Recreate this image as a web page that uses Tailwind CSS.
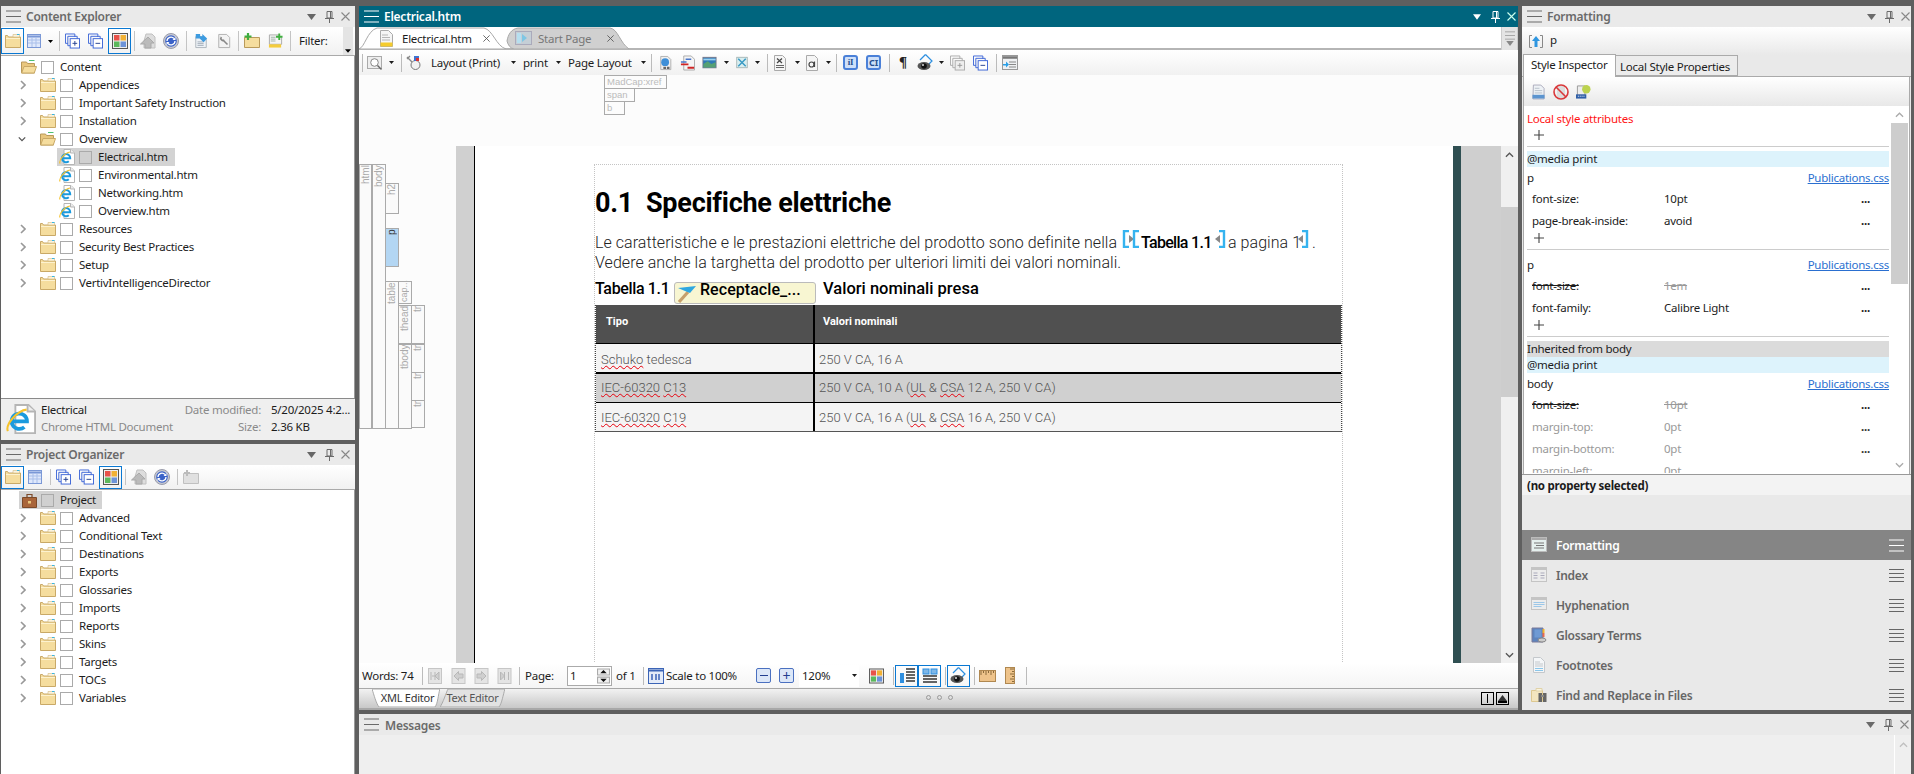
<!DOCTYPE html>
<html lang="en">
<head>
<meta charset="utf-8">
<title>Flare</title>
<script src="https://cdn.jsdelivr.net/npm/@tailwindcss/browser@4"></script>
</head>
<body class="w-[1914px] h-[774px] overflow-hidden bg-[#5f5f5f] flex font-['Noto_Sans',sans-serif] text-[11.5px] tracking-[-0.25px] leading-[18px] text-[#1c1c1c]">
<svg class="hidden">
<symbol id="menu3" viewBox="0 0 15 13"><path d="M0 1h15M0 6.500h15M0 12h15" stroke="currentColor" stroke-width="1" fill="none"/></symbol>
<symbol id="menu4" viewBox="0 0 15 13"><path d="M0 .5h15M0 4.500h15M0 8.500h15M0 12.500h15" stroke="currentColor" stroke-width="1" fill="none"/></symbol>
<symbol id="tri" viewBox="0 0 9 6"><path d="M0 0h9L4.500 6z" fill="currentColor"/></symbol>
<symbol id="pin" viewBox="0 0 9 12"><path d="M2 .5h5v6.500H2zM0 7.500h9M4.500 8v4M5.500 1v6" stroke="currentColor" fill="none"/></symbol>
<symbol id="close" viewBox="0 0 9 9"><path d="M.5.5l8 8M8.500.5l-8 8" stroke="currentColor" stroke-width="1.100" fill="none"/></symbol>
<symbol id="dd" viewBox="0 0 5 3"><path d="M0 0h5L2.500 3z" fill="currentColor"/></symbol>
<symbol id="chev" viewBox="0 0 6 10"><path d="M1 1l4 4-4 4" stroke="#999" stroke-width="1.600" fill="none"/></symbol>
<symbol id="chevd" viewBox="0 0 10 6"><path d="M1 1l4 4 4-4" stroke="#555" stroke-width="1.600" fill="none"/></symbol>
<symbol id="folder" viewBox="0 0 16 16"><path d="M.5 2.500h2l1 1.500h12v10.500H.5z" fill="#f5dd9e" stroke="#c9a967"/><path d="M1 5.500h14" stroke="#fdf2cf"/><path d="M8 1.500h6.500V4H8z" fill="#fbf4df" stroke="#d3b980" stroke-width=".6"/><path d="M12 1.500h2.500" stroke="#35b5e5"/></symbol>
<symbol id="folderopen" viewBox="0 0 16 16"><path d="M.5 3h5l1 1.500h7V14H.5z" fill="#e9c77e" stroke="#b99a5a"/><path d="M.7 14l2.300-6.500h12.500L13.300 14z" fill="#f5dd9e" stroke="#c9a967"/><path d="M8 1.500h5.500" stroke="#4cc070"/></symbol>
<symbol id="ie" viewBox="0 0 16 16"><path d="M5 .5h7l3.500 3.500v11.500H5z" fill="#fff" stroke="#b5b5b5"/><path d="M11.500 .5v3.500h4" fill="#eee" stroke="#b5b5b5"/><path d="M3.300 9.300h7.900A4.100 4.100 0 1 0 9.800 12.300" fill="none" stroke="#1a9ade" stroke-width="2"/><path d="M1 14.500C-.5 11 6 3.500 11 3" fill="none" stroke="#f5c22d" stroke-width="1.100"/></symbol>
<symbol id="grid" viewBox="0 0 16 16"><rect x="1.500" y="1.500" width="13" height="13" fill="#dfe8fb" stroke="#7b98d6"/><path d="M1.500 3.500h13" stroke="#7b98d6" stroke-width="2"/><path d="M2 7h12M2 10h12M6 4v10M10 4v10" stroke="#a9bfea"/></symbol>
<symbol id="plus" viewBox="0 0 16 16"><path d="M.5.5h10v3M.5.500v10h2.500" fill="none" stroke="#3b64d6"/><path d="M3 3h10v3M3 3v10h2.500" fill="none" stroke="#3b64d6"/><rect x="5.500" y="5.500" width="10" height="10" fill="#fff" stroke="#3b64d6"/><path d="M8 10.500h5M10.500 8v5" stroke="#223f90"/></symbol>
<symbol id="minus" viewBox="0 0 16 16"><path d="M.5.5h10v3M.5.500v10h2.500" fill="none" stroke="#3b64d6"/><path d="M3 3h10v3M3 3v10h2.500" fill="none" stroke="#3b64d6"/><rect x="5.500" y="5.500" width="10" height="10" fill="#fff" stroke="#3b64d6"/><path d="M8 10.500h5" stroke="#223f90"/></symbol>
<symbol id="plusg" viewBox="0 0 16 16"><path d="M.5.500h10v3M.5.500v10h2.500" fill="none" stroke="#aaa"/><path d="M3 3h10v3M3 3v10h2.500" fill="none" stroke="#aaa"/><rect x="5.500" y="5.500" width="10" height="10" fill="#eee" stroke="#aaa"/><path d="M8 10.500h5M10.500 8v5" stroke="#999"/></symbol>
<symbol id="colors" viewBox="0 0 16 16"><rect x=".5" y=".5" width="15" height="15" fill="#eee" stroke="#555"/><rect x="2" y="2" width="5.500" height="5.500" fill="#e8524a"/><rect x="8.500" y="2" width="5.500" height="5.500" fill="#f2b134"/><rect x="2" y="8.500" width="5.500" height="5.500" fill="#5cb85c"/><rect x="8.500" y="8.500" width="5.500" height="5.500" fill="#6c93d8"/></symbol>
<symbol id="upg" viewBox="0 0 16 16"><path d="M6 1h6l3 3v11H4V8z" fill="#ddd" stroke="#c0c0c0"/><path d="M.5 11L8 4l6 6h-3v5H5v-4z" fill="#bbb" stroke="#a9a9a9"/></symbol>
<symbol id="sync" viewBox="0 0 16 16"><circle cx="8" cy="8" r="7.500" fill="#c7c9d2" stroke="#9a9cab"/><circle cx="8" cy="8" r="5.800" fill="#3a62c8"/><path d="M4 8a4 4 0 0 1 7-2.500M12 8a4 4 0 0 1-7 2.500" stroke="#fff" stroke-width="1.300" fill="none"/><path d="M9.500 7h3V4zM6.500 9h-3v3z" fill="#fff"/></symbol>
<symbol id="docarrow" viewBox="0 0 16 16"><path d="M2 3h9l3 3v9.500H2z" fill="#eef2f7" stroke="#a8b0b8"/><path d="M4 9h7M4 11h7M4 13h7" stroke="#9ba7b3"/><path d="M2 0h5v2.500h2.500V0L15 5l-4 4.500L6.500 5H2z" fill="#3d9be0"/></symbol>
<symbol id="docwrench" viewBox="0 0 16 16"><path d="M2 .5h9l3.500 3.500v11.500H2z" fill="#f3f3f3" stroke="#aaa"/><path d="M12 12L6.500 6.500M5 3.500a2.500 2.500 0 0 0 3.500 3.500" stroke="#888" stroke-width="1.800" fill="none"/></symbol>
<symbol id="folderplus" viewBox="0 0 16 16"><path d="M.5 4.500h15v10H.5z" fill="#f5dd9e" stroke="#b99a5a"/><path d="M4 0v7M.5 3.500h7" stroke="#3fae3f" stroke-width="2.200"/></symbol>
<symbol id="docplus" viewBox="0 0 16 16"><path d="M1.500 1.500h10l3 3v7h-13z" fill="#f5f5f5" stroke="#aaa"/><path d="M3 4h5M3 6h5M3 8h5" stroke="#9fb2a8"/><rect x="1" y="11.500" width="13" height="3.500" fill="#f4cc3d"/><path d="M12 0v7M8.500 3.500h7" stroke="#3fae3f" stroke-width="2"/></symbol>
<symbol id="foldergplus" viewBox="0 0 16 16"><path d="M.5 4.500h15v10H.5z" fill="#e0e0e0" stroke="#c0c0c0"/><path d="M4 1v6M1 4h6" stroke="#bbb" stroke-width="2"/></symbol>
<symbol id="mag" viewBox="0 0 16 16"><rect x=".5" y="1.500" width="14" height="12" fill="#eee" stroke="#aaa"/><circle cx="7.500" cy="7.500" r="3.800" fill="#fff" stroke="#888"/><path d="M10.500 10.500l4 4" stroke="#666" stroke-width="1.500"/></symbol>
<symbol id="pinmag" viewBox="0 0 16 16"><circle cx="9.500" cy="10" r="4.500" fill="#f1f1f1" stroke="#777"/><path d="M6 7L1 2M4 1l-3 3" stroke="#888" stroke-width="1.400"/><rect x="8" y="1" width="5" height="5" fill="#3f73cf"/><rect x="10" y="3" width="3" height="3" fill="#d93030"/></symbol>
<symbol id="doclink" viewBox="0 0 16 16"><path d="M2 .5h8l3.500 3.500v11.500H2z" fill="#f0f0f0" stroke="#aaa"/><circle cx="7" cy="7" r="4.500" fill="#3e8fd8"/><path d="M5 13.500h8" stroke="#666" stroke-width="2.500" stroke-dasharray="3 1"/></symbol>
<symbol id="docred" viewBox="0 0 16 16"><path d="M4 .5h8l3.500 3.500v11.500H4z" fill="#f5f5f5" stroke="#aaa"/><path d="M6 4h6M1 7h6" stroke="#4a76c9" stroke-width="1.500"/><path d="M1 9.500h8M8 13h7" stroke="#d02525" stroke-width="2"/></symbol>
<symbol id="image" viewBox="0 0 16 16"><rect x=".5" y="1.500" width="15" height="12" fill="#2f79b8" stroke="#778"/><path d="M1 9l5-3 4 3 5-2v6H1z" fill="#56a073"/><path d="M1 3h14v2H1z" fill="#9bd1ef"/></symbol>
<symbol id="ximage" viewBox="0 0 16 16"><rect x="1" y="1" width="14" height="14" fill="#d9eef0" stroke="#9aa"/><path d="M3 3l10 10M13 3L3 13" stroke="#3a9ac4" stroke-width="2"/></symbol>
<symbol id="docx" viewBox="0 0 12 16"><path d="M.5.5h8l3 3v12H.5z" fill="#f5f5f5" stroke="#aaa"/><path d="M3 3.500l5 4.500M8 3.500L3 8" stroke="#444" stroke-width="1.200"/><path d="M2 10.500h8M2 12.500h8" stroke="#666"/></symbol>
<symbol id="doca" viewBox="0 0 12 16"><path d="M.5.5h8l3 3v12H.5z" fill="#f5f5f5" stroke="#aaa"/><circle cx="5.500" cy="9.500" r="2.500" fill="none" stroke="#444" stroke-width="1.200"/><path d="M8.500 6.500v5.500" stroke="#444" stroke-width="1.200"/></symbol>
<symbol id="eye" viewBox="0 0 17 17"><path d="M8.500 .5L15 7l-3 3" fill="none" stroke="#2c8fe0" stroke-width="1.200"/><path d="M8.500 .5L3 6" fill="none" stroke="#2c8fe0" stroke-width="1.200"/><ellipse cx="7" cy="12" rx="6.500" ry="4" fill="#555"/><circle cx="7" cy="12" r="2.800" fill="#111"/><circle cx="6" cy="11" r="1" fill="#ddd"/></symbol>
<symbol id="panel" viewBox="0 0 16 16"><rect x=".5" y=".5" width="15" height="14" fill="#eef0f2" stroke="#999"/><path d="M1 2.500h14" stroke="#777" stroke-width="2.500"/><path d="M7 7h7M7 9.500h7M7 12h7" stroke="#888"/><path d="M1 9h3V6.500L7 9.500 4 12.500V10.500H1z" fill="#2aa0e8"/></symbol>
<symbol id="navfirst" viewBox="0 0 14 16"><rect x=".5" y=".5" width="13" height="15" fill="#e4e4e4" stroke="#c6c6c6"/><path d="M3 4v8M7 4v8M7 8l-3 0M11 4v8L7 8z" stroke="#b8b8b8" fill="#cfcfcf"/></symbol>
<symbol id="navprev" viewBox="0 0 14 16"><rect x=".5" y=".5" width="13" height="15" fill="#e4e4e4" stroke="#c6c6c6"/><path d="M2.500 8L7 3.500V6h4.500v4H7v2.500z" fill="#cfcfcf" stroke="#b8b8b8"/></symbol>
<symbol id="navnext" viewBox="0 0 14 16"><rect x=".5" y=".5" width="13" height="15" fill="#e4e4e4" stroke="#c6c6c6"/><path d="M11.500 8L7 3.500V6H2.500v4H7v2.500z" fill="#cfcfcf" stroke="#b8b8b8"/></symbol>
<symbol id="navlast" viewBox="0 0 14 16"><rect x=".5" y=".5" width="13" height="15" fill="#e4e4e4" stroke="#c6c6c6"/><path d="M11 4v8M7 4v8M3 4v8l4-4z" stroke="#b8b8b8" fill="#cfcfcf"/></symbol>
<symbol id="scale" viewBox="0 0 16 16"><rect x=".5" y=".5" width="15" height="15" fill="#e4ebf8" stroke="#3b64b6"/><path d="M1 2.500h14" stroke="#3b64b6" stroke-width="2"/><path d="M4 6v6M8 6v6M11 6v6" stroke="#3b64b6" stroke-width="1.500"/></symbol>
<symbol id="rulerh" viewBox="0 0 17 12"><rect x=".5" y=".5" width="16" height="11" fill="#eec38a" stroke="#b08850"/><path d="M2 1v4M4.500 1v2M7 1v4M9.500 1v2M12 1v4M14.500 1v2" stroke="#8a6a3a"/></symbol>
<symbol id="rulerv" viewBox="0 0 10 17"><rect x=".5" y=".5" width="9" height="16" fill="#eec38a" stroke="#b08850"/><path d="M9 2H5M9 4.500H7M9 7H5M9 9.500H7M9 12H5M9 14.500H7" stroke="#8a6a3a"/></symbol>
<symbol id="sidebar" viewBox="0 0 16 16"><rect x="1" y="5" width="4" height="10" fill="#2f8fe0"/><path d="M7 1h9M7 4h9M7 7h9M7 10h9M7 13h9" stroke="#333" stroke-width="1.500"/></symbol>
<symbol id="topbar" viewBox="0 0 16 16"><rect x="1" y="1" width="6" height="5" fill="#7eb7e8" stroke="#2f8fe0"/><rect x="9" y="1" width="6" height="5" fill="#7eb7e8" stroke="#2f8fe0"/><path d="M1 8h14M1 11h14M1 14h14" stroke="#333" stroke-width="1.500"/></symbol>
<symbol id="upbox" viewBox="0 0 14 13"><path d="M3 .5H.5v12H3M11 .5h2.500v12H11" fill="none" stroke="#888"/><path d="M7 1L11 6H8.500V12h-3V6H3z" fill="#2f96e0"/></symbol>
<symbol id="sheet" viewBox="0 0 14 16"><path d="M1.500.5h8l3.500 3.500v11.500h-12z" fill="#eef2f6" stroke="#aab"/><path d="M3 4h5M3 6.500h8M3 9h8" stroke="#b5bec8"/><rect x=".5" y="11" width="13" height="4" fill="#5c94cf"/></symbol>
<symbol id="noentry" viewBox="0 0 16 16"><path d="M4 2h8v12H4z" fill="#ddd"/><circle cx="8" cy="8" r="7" fill="none" stroke="#d9383a" stroke-width="1.600"/><path d="M3 3l10 10" stroke="#d9383a" stroke-width="1.600"/></symbol>
<symbol id="sheetlight" viewBox="0 0 16 16"><path d="M1.500 1.500h8v10h-8z" fill="#eee" stroke="#999"/><circle cx="11" cy="5" r="4.500" fill="#bcd34f"/><rect x="0" y="10.500" width="11" height="4.500" fill="#2f5fa8"/><path d="M2 12.500h7" stroke="#fff" stroke-dasharray="1 1"/></symbol>
<symbol id="fmtpanel" viewBox="0 0 16 16"><rect x=".5" y=".5" width="15" height="14" fill="#e5f0ee" stroke="#bbb"/><path d="M1 2h14" stroke="#aaa" stroke-width="2"/><path d="M3 6h10M5 8.500h8M3 11h10" stroke="#777"/></symbol>
<symbol id="idxpanel" viewBox="0 0 16 16"><rect x=".5" y=".5" width="15" height="14" fill="#ececec" stroke="#c4c4c4"/><path d="M1 2h14" stroke="#c4c4c4" stroke-width="2"/><path d="M2.500 6h4M9.500 6h4M2.500 8.500h4M9.500 8.500h4M2.500 11h4M9.500 11h4" stroke="#aab"/></symbol>
<symbol id="hyppanel" viewBox="0 0 16 16"><rect x=".5" y=".5" width="15" height="12" fill="#ececec" stroke="#c4c4c4"/><path d="M1 2h14" stroke="#c4c4c4" stroke-width="2"/><path d="M2.500 5.500h11M2.500 7.500h11M2.500 9.500h8" stroke="#9cc7e8"/></symbol>
<symbol id="book" viewBox="0 0 16 16"><path d="M1 1h11v14H1z" fill="#5d83bd" stroke="#7a7a9a"/><path d="M3.500 2.500h7v8h-7z" fill="#6f9ad4"/><path d="M12.500 2v4" stroke="#f3b32c" stroke-width="2"/><path d="M12.500 6v4" stroke="#e86a50" stroke-width="2"/><ellipse cx="11" cy="13" rx="4" ry="2" fill="#ccc" stroke="#888"/></symbol>
<symbol id="foot" viewBox="0 0 12 16"><path d="M.5.5h7l4 4v11H.500z" fill="#f4f6f8" stroke="#c4c8cc"/><path d="M2 5h5M2 7h8M2 9h8" stroke="#c4c8cc"/><path d="M2 11.500h8M2 13.500h8" stroke="#8ac6ea"/></symbol>
<symbol id="findf" viewBox="0 0 16 16"><path d="M.5 3.500h11V14.500H.5z" fill="#f3e5bf" stroke="#ddc890"/><path d="M5 1.500h6V4H5z" fill="#faf3dd" stroke="#e0d2a8"/><rect x="7.500" y="6" width="3.500" height="9" fill="#666"/><rect x="12" y="6" width="3.500" height="9" fill="#666"/><path d="M10 9h3" stroke="#888" stroke-width="2"/></symbol>
<symbol id="tabicon" viewBox="0 0 13 17"><path d="M.5.5h8l4 4v12H.500z" fill="#f5f5f5" stroke="#aaa"/><path d="M2 5h6M2 7.500h8M2 10h8" stroke="#b5b5b5"/><rect x=".5" y="12.500" width="12" height="4" fill="#f5cc2d"/></symbol>
<symbol id="startpage" viewBox="0 0 17 14"><rect x=".5" y=".5" width="16" height="13" fill="#c5cfd6" stroke="#aab"/><rect x="2" y="2" width="4" height="10" fill="#b6dff0"/><path d="M7 3l5 4-5 4z" fill="#7ec6e4"/></symbol>
<symbol id="hammer" viewBox="0 0 20 20"><path d="M12 8L3 18" stroke="#c7a06b" stroke-width="3.200" fill="none"/><path d="M2 4l18-2-6 7-5-2z" fill="#2ea7e0"/></symbol>
<symbol id="updown" viewBox="0 0 12 14"><path d="M.5.5h11v5.500H.5zM.5 8h11v5.500H.5z" fill="#f1f1f1" stroke="#aaa"/><path d="M3 4.500L6 1.500 9 4.500zM3 9.500L6 12.500 9 9.500z" fill="#111"/></symbol>
<symbol id="chevup" viewBox="0 0 10 6"><path d="M1 5l4-4 4 4" stroke="currentColor" stroke-width="1.400" fill="none"/></symbol>
<symbol id="chevdown" viewBox="0 0 10 6"><path d="M1 1l4 4 4-4" stroke="currentColor" stroke-width="1.400" fill="none"/></symbol>
<symbol id="plussign" viewBox="0 0 10 10"><path d="M5 0v10M0 5h10" stroke="#444" stroke-width="1.100"/></symbol>
<symbol id="bracket" viewBox="0 0 9 18"><path d="M7 1H2v16h5" fill="none" stroke="#35b3ef" stroke-width="2.400"/></symbol>
<symbol id="bracketr" viewBox="0 0 9 18"><path d="M2 1h5v16H2" fill="none" stroke="#35b3ef" stroke-width="2.400"/></symbol>
<symbol id="trileft" viewBox="0 0 5 8"><path d="M5 0v8L0 4z" fill="#888"/></symbol>
<symbol id="triright" viewBox="0 0 5 8"><path d="M0 0v8l5-4z" fill="#888"/></symbol>
</svg>

<!-- left column -->
<div class="ml-[1px] w-[354px] flex flex-col pt-[6px]">
  <div class="h-[21px] bg-[#eaeaea] flex items-center text-[#6a6a6a] shrink-0">
    <svg class="ml-[5px] w-[15px] h-[13px]"><use href="#menu3"/></svg>
    <span class="ml-[5px] font-semibold text-[12px] w-[110px] whitespace-nowrap">Content Explorer</span>
    <svg class="ml-[171px] w-[9px] h-[6px] text-[#666]"><use href="#tri"/></svg>
    <svg class="ml-[9px] w-[9px] h-[12px]"><use href="#pin"/></svg>
    <svg class="ml-[7px] w-[9px] h-[9px] text-[#888]"><use href="#close"/></svg>
  </div>
  <div class="h-[29px] flex items-center bg-gradient-to-b from-white to-[#f1f1f1] border-b border-[#aaa] shrink-0">
    <div class="w-[23px] h-[26px] border border-[#0a78d2] flex items-center justify-center"><svg class="w-[16px] h-[16px]"><use href="#folder"/></svg></div>
    <svg class="ml-[2px] w-[16px] h-[16px]"><use href="#grid"/></svg>
    <svg class="ml-[6px] w-[5px] h-[3px] text-black"><use href="#dd"/></svg>
    <i class="ml-[6px] w-px h-[20px] bg-[#c4c4c4]"></i>
    <svg class="ml-[5px] w-[15px] h-[16px]"><use href="#plus"/></svg>
    <svg class="ml-[8px] w-[15px] h-[16px]"><use href="#minus"/></svg>
    <div class="ml-[5px] w-[23px] h-[26px] border border-[#0a78d2] flex items-center justify-center"><svg class="w-[16px] h-[16px]"><use href="#colors"/></svg></div>
    <i class="ml-[3px] w-px h-[20px] bg-[#c4c4c4]"></i>
    <svg class="ml-[5px] w-[16px] h-[16px]"><use href="#upg"/></svg>
    <svg class="ml-[7px] w-[16px] h-[16px]"><use href="#sync"/></svg>
    <i class="ml-[7px] w-px h-[20px] bg-[#c4c4c4]"></i>
    <svg class="ml-[7px] w-[14px] h-[16px]"><use href="#docarrow"/></svg>
    <svg class="ml-[9px] w-[14px] h-[16px]"><use href="#docwrench"/></svg>
    <i class="ml-[7px] w-px h-[20px] bg-[#c4c4c4]"></i>
    <svg class="ml-[5px] w-[16px] h-[16px]"><use href="#folderplus"/></svg>
    <svg class="ml-[8px] w-[15px] h-[16px]"><use href="#docplus"/></svg>
    <i class="ml-[7px] w-px h-[20px] bg-[#c4c4c4]"></i>
    <span class="ml-[8px] w-[36px] whitespace-nowrap">Filter:</span>
    <div class="ml-[8px] w-[10px] h-[28px] bg-[#e4e4e4] flex flex-col justify-end items-center pb-[2px]"><svg class="w-[6px] h-[4px] text-black"><use href="#dd"/></svg></div>
  </div>
  <div class="h-[342px] bg-white border-r border-[#9a9a9a] pt-[2px] shrink-0">
    <div class="flex items-center h-[18px]"><svg class="ml-[20px] w-[16px] h-[16px]"><use href="#folderopen"/></svg><i class="ml-[4px] w-[13px] h-[13px] border border-[#aaa]"></i><span class="ml-[6px]">Content</span></div>
    <div class="flex items-center h-[18px]"><svg class="ml-[19px] w-[6px] h-[10px]"><use href="#chev"/></svg><svg class="ml-[14px] w-[16px] h-[16px]"><use href="#folder"/></svg><i class="ml-[4px] w-[13px] h-[13px] border border-[#aaa]"></i><span class="ml-[6px]">Appendices</span></div>
    <div class="flex items-center h-[18px]"><svg class="ml-[19px] w-[6px] h-[10px]"><use href="#chev"/></svg><svg class="ml-[14px] w-[16px] h-[16px]"><use href="#folder"/></svg><i class="ml-[4px] w-[13px] h-[13px] border border-[#aaa]"></i><span class="ml-[6px]">Important Safety Instruction</span></div>
    <div class="flex items-center h-[18px]"><svg class="ml-[19px] w-[6px] h-[10px]"><use href="#chev"/></svg><svg class="ml-[14px] w-[16px] h-[16px]"><use href="#folder"/></svg><i class="ml-[4px] w-[13px] h-[13px] border border-[#aaa]"></i><span class="ml-[6px]">Installation</span></div>
    <div class="flex items-center h-[18px]"><svg class="ml-[17px] w-[8px] h-[6px]"><use href="#chevd"/></svg><svg class="ml-[14px] w-[16px] h-[16px]"><use href="#folderopen"/></svg><i class="ml-[4px] w-[13px] h-[13px] border border-[#aaa]"></i><span class="ml-[6px]">Overview</span></div>
    <div class="flex items-center h-[18px] ml-[56px] w-[118px] bg-[#d3d3d3]"><svg class="ml-[2px] w-[16px] h-[16px]"><use href="#ie"/></svg><i class="ml-[4px] w-[13px] h-[13px] border border-[#aaa] bg-[#d0d0d0]"></i><span class="ml-[6px]">Electrical.htm</span></div>
    <div class="flex items-center h-[18px]"><svg class="ml-[58px] w-[16px] h-[16px]"><use href="#ie"/></svg><i class="ml-[4px] w-[13px] h-[13px] border border-[#aaa]"></i><span class="ml-[6px]">Environmental.htm</span></div>
    <div class="flex items-center h-[18px]"><svg class="ml-[58px] w-[16px] h-[16px]"><use href="#ie"/></svg><i class="ml-[4px] w-[13px] h-[13px] border border-[#aaa]"></i><span class="ml-[6px]">Networking.htm</span></div>
    <div class="flex items-center h-[18px]"><svg class="ml-[58px] w-[16px] h-[16px]"><use href="#ie"/></svg><i class="ml-[4px] w-[13px] h-[13px] border border-[#aaa]"></i><span class="ml-[6px]">Overview.htm</span></div>
    <div class="flex items-center h-[18px]"><svg class="ml-[19px] w-[6px] h-[10px]"><use href="#chev"/></svg><svg class="ml-[14px] w-[16px] h-[16px]"><use href="#folder"/></svg><i class="ml-[4px] w-[13px] h-[13px] border border-[#aaa]"></i><span class="ml-[6px]">Resources</span></div>
    <div class="flex items-center h-[18px]"><svg class="ml-[19px] w-[6px] h-[10px]"><use href="#chev"/></svg><svg class="ml-[14px] w-[16px] h-[16px]"><use href="#folder"/></svg><i class="ml-[4px] w-[13px] h-[13px] border border-[#aaa]"></i><span class="ml-[6px]">Security Best Practices</span></div>
    <div class="flex items-center h-[18px]"><svg class="ml-[19px] w-[6px] h-[10px]"><use href="#chev"/></svg><svg class="ml-[14px] w-[16px] h-[16px]"><use href="#folder"/></svg><i class="ml-[4px] w-[13px] h-[13px] border border-[#aaa]"></i><span class="ml-[6px]">Setup</span></div>
    <div class="flex items-center h-[18px]"><svg class="ml-[19px] w-[6px] h-[10px]"><use href="#chev"/></svg><svg class="ml-[14px] w-[16px] h-[16px]"><use href="#folder"/></svg><i class="ml-[4px] w-[13px] h-[13px] border border-[#aaa]"></i><span class="ml-[6px]">VertivIntelligenceDirector</span></div>
  </div>
  <div class="h-[42px] bg-[#efefef] border-t border-[#8a8a8a] flex shrink-0">
    <svg class="ml-[5px] mt-[5px] w-[30px] h-[30px]"><use href="#ie"/></svg>
    <div class="ml-[5px] w-[180px] flex flex-col pt-[2px] leading-[17px]"><span>Electrical</span><span class="text-[#8a8a8a]">Chrome HTML Document</span></div>
    <div class="w-[40px] flex flex-col pt-[2px] leading-[17px] items-end text-[#8a8a8a] whitespace-nowrap"><span>Date modified:</span><span>Size:</span></div>
    <div class="ml-[10px] flex flex-col pt-[2px] leading-[17px] whitespace-nowrap"><span>5/20/2025 4:2...</span><span>2.36 KB</span></div>
  </div>
  <div class="mt-[4px] h-[21px] bg-[#eaeaea] flex items-center text-[#6a6a6a] shrink-0">
    <svg class="ml-[5px] w-[15px] h-[13px]"><use href="#menu3"/></svg>
    <span class="ml-[5px] font-semibold text-[12px] w-[110px] whitespace-nowrap">Project Organizer</span>
    <svg class="ml-[171px] w-[9px] h-[6px] text-[#666]"><use href="#tri"/></svg>
    <svg class="ml-[9px] w-[9px] h-[12px]"><use href="#pin"/></svg>
    <svg class="ml-[7px] w-[9px] h-[9px] text-[#888]"><use href="#close"/></svg>
  </div>
  <div class="h-[25px] flex items-center bg-gradient-to-b from-white to-[#f1f1f1] border-b border-[#aaa] shrink-0">
    <div class="w-[23px] h-[23px] border border-[#0a78d2] flex items-center justify-center"><svg class="w-[16px] h-[16px]"><use href="#folder"/></svg></div>
    <svg class="ml-[3px] w-[16px] h-[16px]"><use href="#grid"/></svg>
    <i class="ml-[7px] w-px h-[16px] bg-[#c4c4c4]"></i>
    <svg class="ml-[5px] w-[15px] h-[16px]"><use href="#plus"/></svg>
    <svg class="ml-[8px] w-[15px] h-[16px]"><use href="#minus"/></svg>
    <div class="ml-[5px] w-[23px] h-[23px] border border-[#0a78d2] flex items-center justify-center"><svg class="w-[16px] h-[16px]"><use href="#colors"/></svg></div>
    <i class="ml-[3px] w-px h-[16px] bg-[#c4c4c4]"></i>
    <svg class="ml-[5px] w-[16px] h-[16px]"><use href="#upg"/></svg>
    <svg class="ml-[7px] w-[16px] h-[16px]"><use href="#sync"/></svg>
    <i class="ml-[7px] w-px h-[16px] bg-[#c4c4c4]"></i>
    <svg class="ml-[5px] w-[16px] h-[16px]"><use href="#foldergplus"/></svg>
  </div>
  <div class="flex-1 bg-white border-r border-[#9a9a9a] pt-[1px]">
    <div class="flex items-center h-[18px] ml-[18px] w-[83px] bg-[#d3d3d3]">
      <svg class="ml-[3px] w-[15px] h-[15px]" viewBox="0 0 15 15"><path d="M.5 4.500h14v10H.5z" fill="#a9653a" stroke="#7c4a2a"/><path d="M5 4.500V1.500h5v3" fill="none" stroke="#7c4a2a" stroke-width="1.200"/><rect x="6" y="8" width="3" height="2.500" fill="#e9c77e"/></svg>
      <i class="ml-[4px] w-[13px] h-[13px] border border-[#aaa] bg-[#d0d0d0]"></i><span class="ml-[6px]">Project</span></div>
    <div class="flex items-center h-[18px]"><svg class="ml-[19px] w-[6px] h-[10px]"><use href="#chev"/></svg><svg class="ml-[14px] w-[16px] h-[16px]"><use href="#folder"/></svg><i class="ml-[4px] w-[13px] h-[13px] border border-[#aaa]"></i><span class="ml-[6px]">Advanced</span></div>
    <div class="flex items-center h-[18px]"><svg class="ml-[19px] w-[6px] h-[10px]"><use href="#chev"/></svg><svg class="ml-[14px] w-[16px] h-[16px]"><use href="#folder"/></svg><i class="ml-[4px] w-[13px] h-[13px] border border-[#aaa]"></i><span class="ml-[6px]">Conditional Text</span></div>
    <div class="flex items-center h-[18px]"><svg class="ml-[19px] w-[6px] h-[10px]"><use href="#chev"/></svg><svg class="ml-[14px] w-[16px] h-[16px]"><use href="#folder"/></svg><i class="ml-[4px] w-[13px] h-[13px] border border-[#aaa]"></i><span class="ml-[6px]">Destinations</span></div>
    <div class="flex items-center h-[18px]"><svg class="ml-[19px] w-[6px] h-[10px]"><use href="#chev"/></svg><svg class="ml-[14px] w-[16px] h-[16px]"><use href="#folder"/></svg><i class="ml-[4px] w-[13px] h-[13px] border border-[#aaa]"></i><span class="ml-[6px]">Exports</span></div>
    <div class="flex items-center h-[18px]"><svg class="ml-[19px] w-[6px] h-[10px]"><use href="#chev"/></svg><svg class="ml-[14px] w-[16px] h-[16px]"><use href="#folder"/></svg><i class="ml-[4px] w-[13px] h-[13px] border border-[#aaa]"></i><span class="ml-[6px]">Glossaries</span></div>
    <div class="flex items-center h-[18px]"><svg class="ml-[19px] w-[6px] h-[10px]"><use href="#chev"/></svg><svg class="ml-[14px] w-[16px] h-[16px]"><use href="#folder"/></svg><i class="ml-[4px] w-[13px] h-[13px] border border-[#aaa]"></i><span class="ml-[6px]">Imports</span></div>
    <div class="flex items-center h-[18px]"><svg class="ml-[19px] w-[6px] h-[10px]"><use href="#chev"/></svg><svg class="ml-[14px] w-[16px] h-[16px]"><use href="#folder"/></svg><i class="ml-[4px] w-[13px] h-[13px] border border-[#aaa]"></i><span class="ml-[6px]">Reports</span></div>
    <div class="flex items-center h-[18px]"><svg class="ml-[19px] w-[6px] h-[10px]"><use href="#chev"/></svg><svg class="ml-[14px] w-[16px] h-[16px]"><use href="#folder"/></svg><i class="ml-[4px] w-[13px] h-[13px] border border-[#aaa]"></i><span class="ml-[6px]">Skins</span></div>
    <div class="flex items-center h-[18px]"><svg class="ml-[19px] w-[6px] h-[10px]"><use href="#chev"/></svg><svg class="ml-[14px] w-[16px] h-[16px]"><use href="#folder"/></svg><i class="ml-[4px] w-[13px] h-[13px] border border-[#aaa]"></i><span class="ml-[6px]">Targets</span></div>
    <div class="flex items-center h-[18px]"><svg class="ml-[19px] w-[6px] h-[10px]"><use href="#chev"/></svg><svg class="ml-[14px] w-[16px] h-[16px]"><use href="#folder"/></svg><i class="ml-[4px] w-[13px] h-[13px] border border-[#aaa]"></i><span class="ml-[6px]">TOCs</span></div>
    <div class="flex items-center h-[18px]"><svg class="ml-[19px] w-[6px] h-[10px]"><use href="#chev"/></svg><svg class="ml-[14px] w-[16px] h-[16px]"><use href="#folder"/></svg><i class="ml-[4px] w-[13px] h-[13px] border border-[#aaa]"></i><span class="ml-[6px]">Variables</span></div>
  </div>
</div>

<!-- right part -->
<div class="ml-[4px] w-[1552px] flex flex-col pt-[6px]">
  <div class="h-[704px] flex shrink-0">
    <!-- center -->
    <div class="w-[1159px] flex flex-col bg-white">
      <div class="h-[21px] bg-[#00657e] flex items-center text-white shrink-0">
        <svg class="ml-[5px] w-[15px] h-[13px]"><use href="#menu3"/></svg>
        <span class="ml-[5px] font-semibold text-[12px] w-[110px] whitespace-nowrap">Electrical.htm</span>
        <svg class="ml-[979px] w-[8px] h-[6px]"><use href="#tri"/></svg>
        <svg class="ml-[10px] w-[9px] h-[12px]"><use href="#pin"/></svg>
        <svg class="ml-[7px] w-[9px] h-[9px] text-[#cfe]"><use href="#close"/></svg>
      </div>
      <div class="h-[23px] bg-white border-b-2 border-[#b5b5b5] flex shrink-0 relative">
        <div class="relative w-[147px] h-[22px] flex items-center">
          <svg class="absolute inset-0 w-[147px] h-[22px]" viewBox="0 0 147 22"><path d="M0 22C6 20 8 4 18 1h107c9 2 12 18 22 21z" fill="#fff" stroke="#a8a8a8"/></svg>
          <svg class="relative ml-[21px] w-[13px] h-[17px]"><use href="#tabicon"/></svg>
          <span class="relative ml-[9px] mt-[1px] w-[70px] whitespace-nowrap">Electrical.htm</span>
          <svg class="relative ml-[11px] w-[7px] h-[7px] text-[#555]"><use href="#close"/></svg>
        </div>
        <div class="relative w-[123px] h-[22px] flex items-center">
          <svg class="absolute inset-0 w-[123px] h-[22px]" viewBox="0 0 123 22"><path d="M1 14C2 8 5 2 12 1h92c8 1 10 15 19 21H8C4 21 2 18 1 14z" fill="#d0d0d0" stroke="#a8a8a8"/></svg>
          <svg class="relative ml-[9px] w-[17px] h-[14px]"><use href="#startpage"/></svg>
          <span class="relative ml-[6px] mt-[1px] w-[55px] whitespace-nowrap text-[#777]">Start Page</span>
          <svg class="relative ml-[14px] w-[7px] h-[7px] text-[#555]"><use href="#close"/></svg>
        </div>
        <div class="ml-auto w-[17px] h-[23px] bg-[#e4e4e4] border-x border-[#ccc] flex flex-col items-center justify-center text-[#888]"><svg class="w-[10px] h-[9px]"><use href="#menu3"/></svg><svg class="mt-[1px] w-[8px] h-[5px]"><use href="#tri"/></svg></div>
      </div>
      <div class="h-[25px] flex items-center bg-gradient-to-b from-white to-[#f1f1f1] shrink-0">
        <i class="ml-[3px] w-px h-[18px] bg-[#bbb]"></i>
        <svg class="ml-[4px] w-[16px] h-[16px]"><use href="#mag"/></svg>
        <svg class="ml-[6px] w-[5px] h-[3px]"><use href="#dd"/></svg>
        <i class="ml-[7px] w-px h-[18px] bg-[#bbb]"></i>
        <svg class="ml-[4px] w-[16px] h-[16px]"><use href="#pinmag"/></svg>
        <span class="ml-[9px] w-[72px] whitespace-nowrap">Layout (Print)</span>
        <svg class="ml-[8px] w-[5px] h-[3px]"><use href="#dd"/></svg>
        <span class="ml-[7px] w-[25px] whitespace-nowrap">print</span>
        <svg class="ml-[8px] w-[5px] h-[3px]"><use href="#dd"/></svg>
        <span class="ml-[7px] w-[65px] whitespace-nowrap">Page Layout</span>
        <svg class="ml-[8px] w-[5px] h-[3px]"><use href="#dd"/></svg>
        <i class="ml-[5px] w-px h-[18px] bg-[#bbb]"></i>
        <svg class="ml-[7px] w-[14px] h-[16px]"><use href="#doclink"/></svg>
        <svg class="ml-[7px] w-[15px] h-[16px]"><use href="#docred"/></svg>
        <svg class="ml-[7px] w-[15px] h-[14px]"><use href="#image"/></svg>
        <svg class="ml-[7px] w-[5px] h-[3px]"><use href="#dd"/></svg>
        <svg class="ml-[7px] w-[12px] h-[15px]"><use href="#ximage"/></svg>
        <svg class="ml-[7px] w-[5px] h-[3px]"><use href="#dd"/></svg>
        <i class="ml-[7px] w-px h-[18px] bg-[#bbb]"></i>
        <svg class="ml-[6px] w-[12px] h-[16px]"><use href="#docx"/></svg>
        <svg class="ml-[9px] w-[5px] h-[3px]"><use href="#dd"/></svg>
        <svg class="ml-[6px] w-[12px] h-[16px]"><use href="#doca"/></svg>
        <svg class="ml-[8px] w-[5px] h-[3px]"><use href="#dd"/></svg>
        <i class="ml-[5px] w-px h-[18px] bg-[#bbb]"></i>
        <span class="ml-[6px] w-[15px] h-[15px] rounded-[3px] bg-[#cfe0f8] border-2 border-[#4a80d8] flex items-center justify-center text-[9px] leading-none font-bold font-['Liberation_Serif',serif] text-[#26508f]">iI</span>
        <span class="ml-[8px] w-[15px] h-[15px] rounded-[3px] bg-[#cfe0f8] border-2 border-[#4a80d8] flex items-center justify-center text-[9px] leading-none font-bold text-[#26508f]">CI</span>
        <i class="ml-[8px] w-px h-[18px] bg-[#bbb]"></i>
        <span class="ml-[9px] w-[8px] text-[15px] font-bold leading-none text-[#222] font-['Liberation_Serif',serif]">¶</span>
        <svg class="ml-[10px] w-[17px] h-[17px]"><use href="#eye"/></svg>
        <svg class="ml-[5px] w-[5px] h-[3px]"><use href="#dd"/></svg>
        <svg class="ml-[6px] w-[15px] h-[16px]"><use href="#plusg"/></svg>
        <svg class="ml-[8px] w-[15px] h-[16px]"><use href="#minus"/></svg>
        <i class="ml-[8px] w-px h-[18px] bg-[#bbb]"></i>
        <svg class="ml-[5px] w-[16px] h-[16px]"><use href="#panel"/></svg>
      </div>
      <!-- canvas -->
      <div class="relative flex-1 flex flex-col min-h-0 overflow-hidden bg-[#fcfcfc] text-[#aaa] font-['Liberation_Sans',sans-serif] text-[9.5px] tracking-normal">
        <div class="h-[71px] shrink-0 pl-[245px] flex flex-col leading-[12px] text-[#bbb]">
          <div class="w-[63px] h-[14px] border border-[#aaa] pl-[2px] whitespace-nowrap">MadCap:xref</div>
          <div class="w-[31px] h-[14px] -mt-px border border-[#aaa] pl-[2px]">span</div>
          <div class="w-[21px] h-[14px] -mt-px border border-[#aaa] pl-[2px]">b</div>
        </div>
        <div class="flex-1 flex min-h-0">
          <div class="w-[97px] pt-[18px] shrink-0 relative">
            <div class="absolute left-0 top-[18px] w-[13px] h-[265px] border border-[#aaa] bg-[#fafafa]"><p class="h-full [writing-mode:vertical-rl] rotate-180 text-right pt-[4px] leading-[11px] text-[10px]">html</p></div>
            <div class="absolute left-[13px] top-[18px] w-[14px] h-[265px] border border-[#aaa] bg-[#fafafa]"><p class="h-full [writing-mode:vertical-rl] rotate-180 text-right pt-[4px] leading-[11px] text-[10px]">body</p></div>
            <div class="absolute left-[26px] top-[37px] w-[14px] h-[31px] border border-[#aaa] bg-[#fafafa]"><p class="h-full [writing-mode:vertical-rl] rotate-180 text-right pt-[4px] leading-[11px] text-[10px]">h2</p></div>
            <div class="absolute left-[26px] top-[82px] w-[14px] h-[39px] border border-[#aaa] bg-[#b3d6f3]"><p class="h-full [writing-mode:vertical-rl] rotate-180 text-right pt-[4px] leading-[11px] text-[10px] text-[#333]">p</p></div>
            <div class="absolute left-[26px] top-[135px] w-[14px] h-[148px] border border-[#aaa] bg-[#fafafa]"><p class="h-full [writing-mode:vertical-rl] rotate-180 text-right pt-[4px] leading-[11px] text-[10px]">table</p></div>
            <div class="absolute left-[39px] top-[135px] w-[14px] h-[23px] border border-[#aaa] bg-[#fafafa]"><p class="h-full [writing-mode:vertical-rl] rotate-180 text-right pt-[1px] leading-[11px] text-[9px] whitespace-nowrap">cap...</p></div>
            <div class="absolute left-[39px] top-[159px] w-[14px] h-[39px] border border-[#aaa] bg-[#fafafa]"><p class="h-full [writing-mode:vertical-rl] rotate-180 text-right pt-[4px] leading-[11px] text-[10px]">thead</p></div>
            <div class="absolute left-[39px] top-[198px] w-[14px] h-[85px] border border-[#aaa] bg-[#fafafa]"><p class="h-full [writing-mode:vertical-rl] rotate-180 text-right pt-[4px] leading-[11px] text-[10px]">tbody</p></div>
            <div class="absolute left-[52px] top-[159px] w-[14px] h-[39px] border border-[#aaa] bg-[#fafafa]"><p class="h-full [writing-mode:vertical-rl] rotate-180 text-right pt-[4px] leading-[11px] text-[10px]">tr</p></div>
            <div class="absolute left-[52px] top-[198px] w-[14px] h-[29px] border border-[#aaa] bg-[#fafafa]"><p class="h-full [writing-mode:vertical-rl] rotate-180 text-right pt-[4px] leading-[11px] text-[10px]">tr</p></div>
            <div class="absolute left-[52px] top-[226px] w-[14px] h-[29px] border border-[#aaa] bg-[#fafafa]"><p class="h-full [writing-mode:vertical-rl] rotate-180 text-right pt-[4px] leading-[11px] text-[10px]">tr</p></div>
            <div class="absolute left-[52px] top-[254px] w-[14px] h-[28px] border border-[#aaa] bg-[#fafafa]"><p class="h-full [writing-mode:vertical-rl] rotate-180 text-right pt-[4px] leading-[11px] text-[10px]">tr</p></div>
          </div>
          <div class="w-[18px] bg-[#d0d0d0] shrink-0"></div>
          <div class="w-px bg-black shrink-0"></div>
          <div class="flex-1 bg-white pl-[119px] pt-[18px] min-w-0 font-['Roboto',sans-serif] text-[#333]">
            <div class="w-[749px] h-[600px] border border-dotted border-[#c4c4c4]">
              <h2 class="h-[68px] pt-[18px] text-[27px] leading-[40px] font-bold text-black whitespace-nowrap tracking-[-0.25px]">0.1&nbsp; Specifiche elettriche</h2>
              <div class="h-[40px] text-[16px] leading-[20px] font-light whitespace-nowrap text-[#222] tracking-[0.05px]">
                <div class="h-[20px] flex items-start">
                  <span class="w-[527px]">Le caratteristiche e le prestazioni elettriche del prodotto sono definite nella</span>
                  <svg class="w-[9px] h-[18px] -mt-[3px]"><use href="#bracket"/></svg><svg class="-ml-[2px] w-[5px] h-[8px] mt-[2px]"><use href="#triright"/></svg><svg class="-ml-[2px] w-[9px] h-[18px] -mt-[3px]"><use href="#bracket"/></svg>
                  <span class="w-[70px] font-medium text-black tracking-[-0.7px] text-[16px]">Tabella 1.1</span>
                  <svg class="ml-[4px] w-[5px] h-[8px] mt-[2px]"><use href="#trileft"/></svg><svg class="-ml-[3px] w-[9px] h-[18px] -mt-[3px]"><use href="#bracketr"/></svg>
                  <span class="ml-[2px] w-[69px]">a pagina 1</span>
                  <svg class="ml-[1px] w-[5px] h-[8px] mt-[2px]"><use href="#trileft"/></svg><svg class="-ml-[3px] w-[9px] h-[18px] -mt-[3px]"><use href="#bracketr"/></svg>
                  <span class="ml-[3px]">.</span>
                </div>
                <div class="h-[20px]">Vedere anche la targhetta del prodotto per ulteriori limiti dei valori nominali.</div>
              </div>
              <div class="h-[32px] flex items-center text-[16px] font-medium text-black whitespace-nowrap">
                <span class="w-[79px] tracking-[-0.35px]">Tabella 1.1</span>
                <div class="h-[22px] w-[142px] self-end mb-[1px] bg-[#f8f6d2] border border-[#bbb] rounded-[3px] flex items-start leading-[14px]"><svg class="w-[20px] h-[20px] mt-[1px] ml-[1px]"><use href="#hammer"/></svg><span class="ml-[4px] tracking-[0.05px]">Receptacle_...</span></div>
                <span class="ml-[7px] text-[16.500px]">Valori nominali presa</span>
              </div>
              <div class="text-[13px] font-light text-[#555] border-x border-dotted border-[#444]">
                <div class="h-[38px] flex bg-[#505050] text-white font-bold text-[11px] leading-[34px]"><div class="w-[219px] pl-[10px] border-r-2 border-black">Tipo</div><div class="pl-[8px]">Valori nominali</div></div>
                <div class="h-[29px] flex bg-[#f4f4f4] border-t border-black"><div class="w-[219px] pl-[5px] leading-[31px] border-r-2 border-black"><span class="underline decoration-wavy decoration-red-600 decoration-1">Schuko</span> tedesca</div><div class="pl-[4px] leading-[31px]">250 V CA, 16 A</div></div>
                <div class="h-[30px] flex bg-[#d0d0d0] border-t-2 border-black"><div class="w-[219px] pl-[5px] leading-[28px] border-r-2 border-black"><span class="underline decoration-wavy decoration-red-600 decoration-1">IEC-60320</span> <span class="underline decoration-wavy decoration-red-600 decoration-1">C13</span></div><div class="pl-[4px] leading-[28px]">250 V CA, 10 A (<span class="underline decoration-wavy decoration-red-600 decoration-1">UL</span> &amp; <span class="underline decoration-wavy decoration-red-600 decoration-1">CSA</span> 12 A, 250 V CA)</div></div>
                <div class="h-[30px] flex bg-[#f4f4f4] border-t border-black border-b border-b-[#555]"><div class="w-[219px] pl-[5px] leading-[29px] border-r-2 border-black"><span class="underline decoration-wavy decoration-red-600 decoration-1">IEC-60320</span> <span class="underline decoration-wavy decoration-red-600 decoration-1">C19</span></div><div class="pl-[4px] leading-[29px]">250 V CA, 16 A (<span class="underline decoration-wavy decoration-red-600 decoration-1">UL</span> &amp; <span class="underline decoration-wavy decoration-red-600 decoration-1">CSA</span> 16 A, 250 V CA)</div></div>
              </div>
            </div>
          </div>
          <div class="w-[8px] bg-[#2f4f52] shrink-0"></div>
          <div class="w-[40px] bg-[#cfcfcf] shrink-0"></div>
          <div class="w-[17px] bg-[#f0f0f0] shrink-0 flex flex-col items-center text-[#555]">
            <svg class="mt-[6px] w-[9px] h-[6px]"><use href="#chevup"/></svg>
            <div class="mt-[49px] w-full h-[190px] bg-[#cdcdcd]"></div>
            <svg class="mt-auto mb-[5px] w-[9px] h-[6px]"><use href="#chevdown"/></svg>
          </div>
        </div>
      </div>
      <!-- status -->
      <div class="h-[26px] flex items-center bg-gradient-to-b from-white to-[#f5f5f5] border-b border-[#a8a8a8] shrink-0">
        <span class="ml-[3px] w-[52px] whitespace-nowrap">Words: 74</span>
        <i class="ml-[8px] w-px h-[18px] bg-[#bbb]"></i>
        <svg class="ml-[5px] w-[14px] h-[16px]"><use href="#navfirst"/></svg>
        <svg class="ml-[9px] w-[15px] h-[16px]"><use href="#navprev"/></svg>
        <svg class="ml-[8px] w-[15px] h-[16px]"><use href="#navnext"/></svg>
        <svg class="ml-[8px] w-[15px] h-[16px]"><use href="#navlast"/></svg>
        <i class="ml-[7px] w-px h-[18px] bg-[#bbb]"></i>
        <span class="ml-[5px] w-[28px] whitespace-nowrap">Page:</span>
        <div class="ml-[14px] w-[45px] h-[20px] border border-[#aaa] bg-white flex items-center pl-[2px] justify-between pr-[1px]"><span class="leading-none">1</span><svg class="w-[13px] h-[16px]"><use href="#updown"/></svg></div>
        <span class="ml-[4px] w-[18px] whitespace-nowrap">of 1</span>
        <i class="ml-[9px] w-px h-[18px] bg-[#bbb]"></i>
        <svg class="ml-[4px] w-[16px] h-[16px]"><use href="#scale"/></svg>
        <span class="ml-[2px] w-[72px] whitespace-nowrap">Scale to 100%</span>
        <span class="ml-[18px] w-[15px] h-[15px] bg-[#dce7f8] border border-[#4a70c0] rounded-[2px] flex items-center justify-center"><i class="w-[8px] h-px bg-[#223f90]"></i></span>
        <span class="ml-[8px] w-[15px] h-[15px] bg-[#dce7f8] border border-[#4a70c0] rounded-[2px] flex items-center justify-center text-[#223f90] text-[14px] leading-none">+</span>
        <div class="ml-[5px] w-[60px] h-[22px] bg-white flex items-center pl-[3px] justify-between pr-[2px]"><span>120%</span><svg class="w-[5px] h-[3px]"><use href="#dd"/></svg></div>
        <svg class="ml-[10px] w-[15px] h-[16px]"><use href="#colors"/></svg>
        <i class="ml-[9px] w-px h-[18px] bg-[#bbb]"></i>
        <div class="ml-[1px] w-[23px] h-[22px] border border-[#0a78d2] flex items-center justify-center"><svg class="w-[16px] h-[16px]"><use href="#sidebar"/></svg></div>
        <div class="w-[23px] h-[22px] border border-[#0a78d2] flex items-center justify-center"><svg class="w-[16px] h-[16px]"><use href="#topbar"/></svg></div>
        <i class="ml-[4px] w-px h-[18px] bg-[#bbb]"></i>
        <div class="ml-[1px] w-[23px] h-[22px] border border-[#0a78d2] flex items-center justify-center"><svg class="w-[17px] h-[17px]"><use href="#eye"/></svg></div>
        <i class="ml-[4px] w-px h-[18px] bg-[#bbb]"></i>
        <svg class="ml-[4px] w-[17px] h-[12px]"><use href="#rulerh"/></svg>
        <svg class="ml-[9px] w-[10px] h-[17px]"><use href="#rulerv"/></svg>
        <i class="ml-[11px] w-px h-[18px] bg-[#bbb]"></i>
      </div>
      <div class="h-[21px] flex bg-gradient-to-b from-[#f2f2f2] to-[#c8c8c8] border-b-2 border-[#a8a8a8] shrink-0 items-start text-[11px] text-[#333] leading-[18px]">
        <div class="relative ml-[13px] w-[68px] h-[18px] flex justify-center pl-[3px]">
          <svg class="absolute inset-0 w-[68px] h-[18px]" viewBox="0 0 68 18"><path d="M0 0c2 6 4 14 7 18h56c3-4 3-12 5-18z" fill="#fff" stroke="#aaa"/></svg>
          <span class="relative">XML Editor</span></div>
        <div class="relative w-[65px] h-[18px] flex justify-center">
          <svg class="absolute inset-0 w-[65px] h-[18px]" viewBox="0 0 65 18"><path d="M0 18c3-4 6-14 8-18h57c-2 6-3 14-6 18z" fill="#e2e2e2" stroke="#aaa"/></svg>
          <span class="relative text-[#555]">Text Editor</span></div>
        <div class="ml-[421px] flex gap-[6px] mt-[6px]"><i class="w-[5px] h-[5px] rounded-full border border-[#999]"></i><i class="w-[5px] h-[5px] rounded-full border border-[#999]"></i><i class="w-[5px] h-[5px] rounded-full border border-[#999]"></i></div>
        <div class="ml-[528px] mt-[3px] w-[13px] h-[13px] border border-black flex items-center justify-center"><i class="w-px h-[9px] bg-black"></i></div>
        <div class="ml-[2px] mt-[3px] w-[13px] h-[13px] border border-black flex flex-col items-center justify-center"><svg class="w-[9px] h-[6px] rotate-180"><use href="#tri"/></svg><i class="w-[9px] h-[2px] bg-black"></i></div>
      </div>
    </div>
    <!-- right panel -->
    <div class="ml-[4px] w-[389px] flex flex-col bg-[#e9e9e9]">
      <div class="h-[21px] flex items-center text-[#6a6a6a] shrink-0 bg-[#eaeaea]">
        <svg class="ml-[5px] w-[15px] h-[13px]"><use href="#menu3"/></svg>
        <span class="ml-[5px] font-semibold text-[12px] w-[100px] whitespace-nowrap">Formatting</span>
        <svg class="ml-[220px] w-[9px] h-[6px]"><use href="#tri"/></svg>
        <svg class="ml-[9px] w-[9px] h-[12px]"><use href="#pin"/></svg>
        <svg class="ml-[7px] w-[9px] h-[9px] text-[#888]"><use href="#close"/></svg>
      </div>
      <div class="h-[28px] flex items-center bg-gradient-to-b from-white to-[#e9e9e9] shrink-0">
        <svg class="ml-[7px] w-[14px] h-[13px]"><use href="#upbox"/></svg><span class="ml-[7px] -mt-[2px]">p</span>
      </div>
      <div class="h-[22px] flex shrink-0 border-b border-[#aaa] pl-[1px] relative">
        <div class="w-[93px] h-[23px] -mt-[1px] bg-white border border-[#aaa] border-b-0 pl-[7px] leading-[20px] whitespace-nowrap relative">Style Inspector</div>
        <div class="w-[122px] h-[21px] bg-[#ececec] border border-l-0 border-[#aaa] pl-[4px] leading-[21px] whitespace-nowrap">Local Style Properties</div>
      </div>
      <div class="mx-[1px] flex-1 flex flex-col border-x border-[#aaa] bg-white min-h-0">
        <div class="h-[29px] flex items-center bg-gradient-to-b from-white to-[#e8e8e8] shrink-0">
          <svg class="ml-[8px] w-[13px] h-[16px]"><use href="#sheet"/></svg>
          <svg class="ml-[8px] w-[16px] h-[16px]"><use href="#noentry"/></svg>
          <svg class="ml-[7px] w-[15px] h-[16px]"><use href="#sheetlight"/></svg>
        </div>
        <div class="h-[367px] flex shrink-0">
          <div class="w-[367px] h-[367px] overflow-hidden pl-[3px] pr-[2px]">
            <div class="h-[22px] pt-[4px] text-[#ff1515]">Local style attributes</div>
            <div class="h-[14px] flex items-center"><svg class="ml-[7px] w-[10px] h-[10px]"><use href="#plussign"/></svg></div>
            <div class="mt-[4px] h-px bg-[#ccc]"></div>
            <div class="mt-[4px] h-[16px] bg-[#ddf3fc] leading-[16px]">@media print</div>
            <div class="h-[21px] flex items-center justify-between"><span>p</span><span class="text-[#2a6fd0] underline">Publications.css</span></div>
            <div class="h-[22px] flex items-center pl-[5px]"><span class="w-[132px]">font-size:</span><span class="w-[197px]">10pt</span><b class="font-bold">...</b></div>
            <div class="h-[22px] flex items-center pl-[5px]"><span class="w-[132px]">page-break-inside:</span><span class="w-[197px]">avoid</span><b class="font-bold">...</b></div>
            <div class="h-[12px] flex items-center"><svg class="ml-[7px] w-[10px] h-[10px]"><use href="#plussign"/></svg></div>
            <div class="mt-[5px] h-px bg-[#ccc]"></div>
            <div class="mt-[4px] h-[21px] flex items-center justify-between"><span>p</span><span class="text-[#2a6fd0] underline">Publications.css</span></div>
            <div class="h-[22px] flex items-center pl-[5px]"><span class="w-[132px] line-through">font-size:</span><span class="w-[197px] line-through text-[#999]">1em</span><b class="font-bold">...</b></div>
            <div class="h-[22px] flex items-center pl-[5px]"><span class="w-[132px]">font-family:</span><span class="w-[197px]">Calibre Light</span><b class="font-bold">...</b></div>
            <div class="h-[12px] flex items-center"><svg class="ml-[7px] w-[10px] h-[10px]"><use href="#plussign"/></svg></div>
            <div class="mt-[5px] h-px bg-[#ccc]"></div>
            <div class="mt-[4px] h-[16px] bg-[#dbdbdb] leading-[16px]">Inherited from body</div>
            <div class="h-[16px] bg-[#ddf3fc] leading-[16px]">@media print</div>
            <div class="h-[21px] flex items-center justify-between"><span>body</span><span class="text-[#2a6fd0] underline">Publications.css</span></div>
            <div class="h-[22px] flex items-center pl-[5px]"><span class="w-[132px] line-through">font-size:</span><span class="w-[197px] line-through text-[#999]">10pt</span><b class="font-bold">...</b></div>
            <div class="h-[22px] flex items-center pl-[5px] text-[#999]"><span class="w-[132px]">margin-top:</span><span class="w-[197px]">0pt</span><b class="font-bold text-[#333]">...</b></div>
            <div class="h-[22px] flex items-center pl-[5px] text-[#999]"><span class="w-[132px]">margin-bottom:</span><span class="w-[197px]">0pt</span><b class="font-bold text-[#333]">...</b></div>
            <div class="h-[22px] flex items-center pl-[5px] text-[#999]"><span class="w-[132px]">margin-left:</span><span class="w-[197px]">0pt</span><b class="font-bold text-[#333]">...</b></div>
          </div>
          <div class="w-[17px] h-[367px] bg-white flex flex-col items-center text-[#aaa] shrink-0">
            <svg class="mt-[6px] w-[9px] h-[6px]"><use href="#chevup"/></svg>
            <div class="mt-[5px] w-full h-[161px] bg-[#cdcdcd]"></div>
            <svg class="mt-auto mb-[5px] w-[9px] h-[6px]"><use href="#chevdown"/></svg>
          </div>
        </div>
      </div>
      <div class="h-[21px] bg-[#f3f3f3] border-t border-[#999] font-bold pl-[5px] leading-[21px] shrink-0">(no property selected)</div>
      <div class="h-[35px] shrink-0"></div>
      <div class="h-[30px] bg-[#858585] text-white font-semibold text-[12px] flex items-center shrink-0"><svg class="ml-[9px] w-[16px] h-[16px]"><use href="#fmtpanel"/></svg><span class="ml-[9px] pt-[2px]">Formatting</span><svg class="ml-auto mr-[7px] w-[15px] h-[13px]"><use href="#menu3"/></svg></div>
      <div class="h-[30px] text-[#666] font-semibold text-[12px] flex items-center shrink-0"><svg class="ml-[9px] w-[16px] h-[16px]"><use href="#idxpanel"/></svg><span class="ml-[9px] pt-[2px]">Index</span><svg class="ml-auto mr-[7px] w-[15px] h-[13px]"><use href="#menu4"/></svg></div>
      <div class="h-[30px] text-[#666] font-semibold text-[12px] flex items-center shrink-0"><svg class="ml-[9px] w-[16px] h-[16px]"><use href="#hyppanel"/></svg><span class="ml-[9px] pt-[2px]">Hyphenation</span><svg class="ml-auto mr-[7px] w-[15px] h-[13px]"><use href="#menu4"/></svg></div>
      <div class="h-[30px] text-[#666] font-semibold text-[12px] flex items-center shrink-0"><svg class="ml-[9px] w-[16px] h-[16px]"><use href="#book"/></svg><span class="ml-[9px] pt-[2px]">Glossary Terms</span><svg class="ml-auto mr-[7px] w-[15px] h-[13px]"><use href="#menu4"/></svg></div>
      <div class="h-[30px] text-[#666] font-semibold text-[12px] flex items-center shrink-0"><svg class="ml-[11px] w-[12px] h-[16px]"><use href="#foot"/></svg><span class="ml-[11px] pt-[2px]">Footnotes</span><svg class="ml-auto mr-[7px] w-[15px] h-[13px]"><use href="#menu4"/></svg></div>
      <div class="h-[30px] text-[#666] font-semibold text-[12px] flex items-center shrink-0"><svg class="ml-[9px] w-[16px] h-[16px]"><use href="#findf"/></svg><span class="ml-[9px] pt-[2px]">Find and Replace in Files</span><svg class="ml-auto mr-[7px] w-[15px] h-[13px]"><use href="#menu4"/></svg></div>
    </div>
  </div>
  <!-- messages -->
  <div class="mt-[4px] w-[1552px] h-[60px] flex flex-col bg-[#efefef] shrink-0">
    <div class="h-[21px] bg-[#eaeaea] flex items-center text-[#6a6a6a] shrink-0">
      <svg class="ml-[5px] w-[15px] h-[13px]"><use href="#menu3"/></svg>
      <span class="ml-[6px] pt-[2px] font-semibold text-[12px] w-[70px]">Messages</span>
      <svg class="ml-[1411px] w-[9px] h-[6px]"><use href="#tri"/></svg>
      <svg class="ml-[9px] w-[9px] h-[12px]"><use href="#pin"/></svg>
      <svg class="ml-[7px] w-[9px] h-[9px] text-[#888]"><use href="#close"/></svg>
    </div>
    <div class="flex-1 flex justify-end"><div class="w-[17px] border-l border-white text-[#c0c0c0] flex justify-center pt-[7px]"><svg class="w-[9px] h-[6px]"><use href="#chevup"/></svg></div></div>
  </div>
</div>
</body>
</html>
